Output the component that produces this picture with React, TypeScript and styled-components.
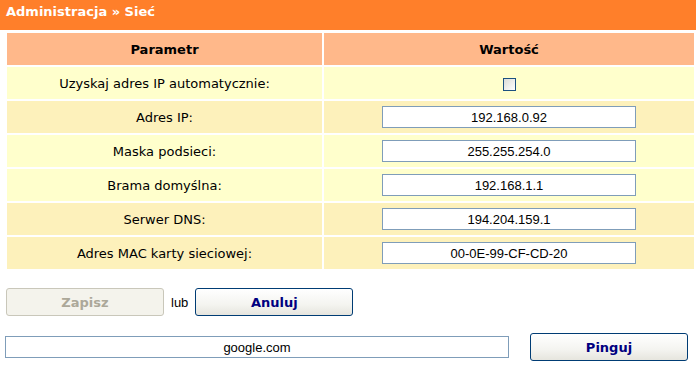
import React from 'react';
import styled, { createGlobalStyle } from 'styled-components';

const GlobalStyle = createGlobalStyle`
    html, body {
        margin: 0;
        padding: 0;
        background: #ffffff;
    }
    body {
        font-family: 'DejaVu Sans', Verdana, sans-serif;
        font-size: 13px;
        color: #000000;
    }
`;

type Row = { label: string; value?: string; tone: 'light' | 'dark'; checkbox?: boolean };

const rows: Row[] = [
    { label: 'Uzyskaj adres IP automatycznie:', tone: 'light', checkbox: true },
    { label: 'Adres IP:', value: '192.168.0.92', tone: 'dark' },
    { label: 'Maska podsieci:', value: '255.255.254.0', tone: 'light' },
    { label: 'Brama domyślna:', value: '192.168.1.1', tone: 'light' },
    { label: 'Serwer DNS:', value: '194.204.159.1', tone: 'dark' },
    { label: 'Adres MAC karty sieciowej:', value: '00-0E-99-CF-CD-20', tone: 'dark' },
];

const App = (): JSX.Element => {
    return (
        <>
            <GlobalStyle />
            <Page>
                <Header>Administracja » Sieć</Header>
                <SettingsTable>
                    <colgroup>
                        <col style={{ width: 315 }} />
                        <col />
                    </colgroup>
                    <thead>
                        <tr>
                            <HeadCell>Parametr</HeadCell>
                            <HeadCell>Wartość</HeadCell>
                        </tr>
                    </thead>
                    <tbody>
                        {rows.map((row) => (
                            <tr key={row.label}>
                                <Cell tone={row.tone}>{row.label}</Cell>
                                <Cell tone={row.tone}>
                                    {row.checkbox ? <Checkbox /> : <ValueInput readOnly value={row.value} />}
                                </Cell>
                            </tr>
                        ))}
                    </tbody>
                </SettingsTable>
                <ActionRow>
                    <Button disabled>Zapisz</Button>
                    <Or>lub</Or>
                    <Button>Anuluj</Button>
                </ActionRow>
                <PingRow>
                    <PingInput readOnly value="google.com" />
                    <Button>Pinguj</Button>
                </PingRow>
            </Page>
        </>
    );
};

const Page = styled.main`
    width: 696px;
    height: 372px;
    overflow: hidden;
`;

const Header = styled.h1`
    margin: 0;
    height: 30px;
    line-height: 24px;
    padding: 0 6px;
    background: #ff7f2a;
    color: #ffffff;
    font-size: 13px;
    font-weight: bold;
`;

const SettingsTable = styled.table`
    margin: 1px 0 0 5px;
    width: 691px;
    border-spacing: 2px;
    table-layout: fixed;
`;

const HeadCell = styled.th`
    height: 32px;
    padding: 0;
    background: #ffb88a;
    font-size: 13px;
    font-weight: bold;
    text-align: center;
`;

const Cell = styled.td<{ tone: 'light' | 'dark' }>`
    height: 32px;
    padding: 0;
    background: ${(p) => (p.tone === 'light' ? '#ffffcc' : '#fdf1bb')};
    text-align: center;
    vertical-align: middle;
`;

const Checkbox = styled.span`
    display: inline-block;
    width: 11px;
    height: 11px;
    border: 1px solid #1c5180;
    background: linear-gradient(135deg, #dcdcd7 0%, #ffffff 100%);
    vertical-align: middle;
`;

const ValueInput = styled.input`
    box-sizing: border-box;
    display: block;
    width: 254px;
    height: 22px;
    margin: 0 auto;
    padding: 0;
    border: 1px solid #7f9db9;
    background: #ffffff;
    font-family: 'Liberation Sans', Arial, sans-serif;
    font-size: 13px;
    text-align: center;
    outline: none;
`;

const ActionRow = styled.div`
    display: flex;
    align-items: center;
    gap: 7px;
    margin: 17px 0 0 6px;
`;

const Or = styled.span`
    font-family: 'Liberation Sans', Arial, sans-serif;
    font-size: 13px;
`;

const Button = styled.button`
    box-sizing: border-box;
    width: 158px;
    height: 28px;
    border: 1px solid #003c74;
    border-radius: 3px;
    background: linear-gradient(to bottom, #ffffff 0%, #f4f4f0 60%, #e6e5de 100%);
    color: #000080;
    font-family: 'DejaVu Sans', Verdana, sans-serif;
    font-size: 13px;
    font-weight: bold;
    padding: 0;
    cursor: pointer;

    &:disabled {
        border-color: #c9c7ba;
        background: #f4f3ec;
        color: #aca899;
        cursor: default;
    }
`;

const PingRow = styled.div`
    display: flex;
    align-items: center;
    justify-content: space-between;
    margin: 17px 8px 0 5px;
`;

const PingInput = styled(ValueInput)`
    width: 504px;
    margin: 0;
`;

export default App;
